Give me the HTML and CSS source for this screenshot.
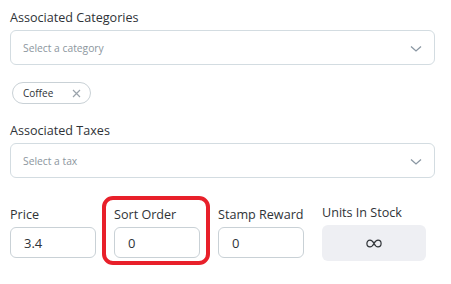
FILE: index.html
```html
<!DOCTYPE html>
<html lang="en">
<head>
    <meta charset="UTF-8">
    <title>Product Details</title>
    <link rel="stylesheet" href="styles.css">
</head>
<body>
    <div class="form">
        <div class="field">
            <label class="field-label">Associated Categories</label>
            <div class="select">
                <span class="select-placeholder">Select a category</span>
                <svg class="chevron" width="12" height="8" viewBox="0 0 12 8"><path d="M1 1.5l5 4.5 5-4.5" fill="none" stroke="#8a97a3" stroke-width="1.3"/></svg>
            </div>
        </div>
        <div class="chips">
            <span class="chip">Coffee
                <svg class="chip-x" width="9" height="9" viewBox="0 0 9 9"><path d="M1 1l7 7M8 1l-7 7" stroke="#9aa3ab" stroke-width="1.2"/></svg>
            </span>
        </div>
        <div class="field">
            <label class="field-label">Associated Taxes</label>
            <div class="select">
                <span class="select-placeholder">Select a tax</span>
                <svg class="chevron" width="12" height="8" viewBox="0 0 12 8"><path d="M1 1.5l5 4.5 5-4.5" fill="none" stroke="#8a97a3" stroke-width="1.3"/></svg>
            </div>
        </div>
        <div class="number-row">
            <div class="number-field">
                <label class="field-label">Price</label>
                <input class="number-input" type="text" value="3.4">
            </div>
            <div class="number-field highlighted">
                <label class="field-label">Sort Order</label>
                <input class="number-input" type="text" value="0">
            </div>
            <div class="number-field">
                <label class="field-label">Stamp Reward</label>
                <input class="number-input" type="text" value="0">
            </div>
            <div class="number-field stock-field">
                <label class="field-label">Units In Stock</label>
                <div class="stock-box">
                    <svg width="16" height="9" viewBox="0 0 16 9"><path d="M8 4.5C6.7 2 5.4 1.1 4 1.1 2.1 1.1 0.9 2.6 0.9 4.5S2.1 7.9 4 7.9C5.4 7.9 6.7 7 8 4.5S10.6 1.1 12 1.1c1.9 0 3.1 1.5 3.1 3.4S13.9 7.9 12 7.9C10.6 7.9 9.3 7 8 4.5z" fill="none" stroke="#2f3337" stroke-width="1.2"/></svg>
                </div>
            </div>
        </div>
    </div>
</body>
</html>
```

FILE: styles.css
```css
body {
    margin: 0;
    background: #ffffff;
    font-family: 'Open Sans', 'Noto Sans', sans-serif;
    color: #2f3337;
}

.form {
    padding: 9px 16px 20px 10px;
}

.field-label {
    display: block;
    font-size: 12.6px;
    line-height: 18px;
    color: #2f3337;
    margin-bottom: 3px;
    white-space: nowrap;
}

.select {
    height: 35px;
    box-sizing: border-box;
    border: 1px solid #d3dce1;
    border-radius: 6px;
    display: flex;
    align-items: center;
    justify-content: space-between;
    padding: 0 12px 0 12px;
}

.select-placeholder {
    font-size: 10.3px;
    color: #8c969e;
}

.chevron {
    margin-top: 2px;
}

.chips {
    padding: 17px 0 17px 2px;
    display: flex;
}

.chip {
    display: inline-flex;
    align-items: center;
    height: 22px;
    box-sizing: border-box;
    border: 1px solid #c9d1d6;
    border-radius: 11px;
    padding: 0 9px 0 10px;
    font-size: 10px;
    color: #2f3337;
}

.chip-x {
    margin-left: 19px;
}

.chips + .field {
    margin-top: 1px;
}

.number-row {
    display: flex;
    align-items: flex-start;
    gap: 18px;
    margin-top: 28px;
}

.number-field {
    position: relative;
    width: 86px;
}

.number-input {
    display: block;
    width: 86px;
    height: 31px;
    box-sizing: border-box;
    border: 1px solid #c9d1d6;
    border-radius: 6px;
    padding: 0 13px;
    font-family: inherit;
    font-size: 13px;
    color: #2f3337;
    outline: none;
}

.highlighted::after {
    content: '';
    position: absolute;
    left: -12px;
    top: -10px;
    width: 108px;
    height: 69px;
    box-sizing: border-box;
    border: 4px solid #e8202a;
    border-radius: 11px;
}

.stock-field {
    width: 104px;
    margin-top: -2px;
}

.stock-box {
    height: 36px;
    background: #eeeff3;
    border-radius: 6px;
    display: flex;
    align-items: center;
    justify-content: center;
}
```
